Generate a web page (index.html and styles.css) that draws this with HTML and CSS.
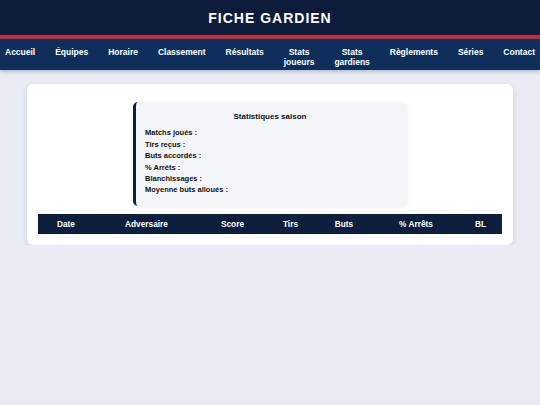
FILE: index.html
```html
<!DOCTYPE html>
<html lang="fr">
<head>
<meta charset="utf-8">
<title>Fiche gardien</title>
<link rel="stylesheet" href="styles.css">
</head>
<body>
<header class="site-header">
  <h1 class="site-title">FICHE GARDIEN</h1>
</header>
<nav class="main-nav">
  <a href="#">Accueil</a>
  <a href="#">Équipes</a>
  <a href="#">Horaire</a>
  <a href="#">Classement</a>
  <a href="#">Résultats</a>
  <a href="#" class="wrap">Stats joueurs</a>
  <a href="#" class="wrap">Stats gardiens</a>
  <a href="#">Règlements</a>
  <a href="#">Séries</a>
  <a href="#">Contact</a>
</nav>
<main class="card">
  <section class="stats-box">
    <h2 class="stats-title">Statistiques saison</h2>
    <p class="stat-line">Matchs joués :</p>
    <p class="stat-line">Tirs reçus :</p>
    <p class="stat-line">Buts accordés :</p>
    <p class="stat-line">% Arrêts :</p>
    <p class="stat-line">Blanchissages :</p>
    <p class="stat-line">Moyenne buts alloués :</p>
  </section>
  <table class="games">
    <colgroup>
      <col class="c-date">
      <col class="c-adv">
      <col class="c-score">
      <col class="c-tirs">
      <col class="c-buts">
      <col class="c-pct">
      <col class="c-bl">
    </colgroup>
    <thead>
      <tr>
        <th>Date</th>
        <th>Adversaire</th>
        <th>Score</th>
        <th>Tirs</th>
        <th>Buts</th>
        <th>% Arrêts</th>
        <th>BL</th>
      </tr>
    </thead>
    <tbody></tbody>
  </table>
</main>
</body>
</html>
```
FILE: styles.css
```css
html, body {
  margin: 0;
  padding: 0;
}
body {
  background: #e8ecf4;
  font-family: "Liberation Sans", Arial, Helvetica, sans-serif;
  color: #111;
}
.site-header {
  background: #0e1c3c;
  height: 35px;
  border-bottom: 4px solid #c1313a;
  display: flex;
  align-items: center;
  justify-content: center;
}
.site-title {
  margin: 0;
  color: #fff;
  font-size: 14px;
  font-weight: bold;
  letter-spacing: 1px;
  line-height: 1;
  padding-top: 1px;
}
.main-nav {
  background: #0f2e5a;
  display: flex;
  justify-content: space-between;
  align-items: flex-start;
  padding: 8px 5px 3px;
  box-shadow: 0 2px 4px rgba(0, 0, 0, 0.2);
}
.main-nav a {
  color: #fff;
  text-decoration: none;
  font-size: 8.5px;
  font-weight: bold;
  line-height: 10px;
  text-align: center;
  white-space: nowrap;
}
.main-nav a.wrap {
  white-space: normal;
  width: min-content;
}
.card {
  display: block;
  width: 90%;
  box-sizing: border-box;
  margin: 14px auto 0;
  background: #fff;
  border-radius: 6px;
  padding: 11px;
  box-shadow: 0 2px 6px rgba(0, 0, 0, 0.12);
}
.stats-box {
  width: 274px;
  box-sizing: border-box;
  margin: 7px auto 8px;
  background: #f3f5f9;
  border-left: 3px solid #0e1f3e;
  border-radius: 5px;
  padding: 9px 12px 10px 9px;
  box-shadow: 0 1px 4px rgba(0, 0, 0, 0.08);
}
.stats-title {
  margin: 0 0 5px;
  font-size: 8px;
  line-height: 11.4px;
  font-weight: bold;
  text-align: center;
}
.stat-line {
  margin: 0;
  font-size: 7.5px;
  line-height: 11.4px;
  font-weight: bold;
}
.games {
  width: 100%;
  border-collapse: collapse;
  table-layout: fixed;
}
.games th {
  background: #0e1f3e;
  color: #fff;
  font-size: 8.3px;
  font-weight: bold;
  line-height: 10px;
  padding: 5px 0;
  text-align: center;
}
.c-date { width: 56px; }
.c-adv { width: 105px; }
.c-score { width: 67px; }
.c-tirs { width: 49px; }
.c-buts { width: 58px; }
.c-pct { width: 86px; }
.c-bl { width: 43px; }
```
